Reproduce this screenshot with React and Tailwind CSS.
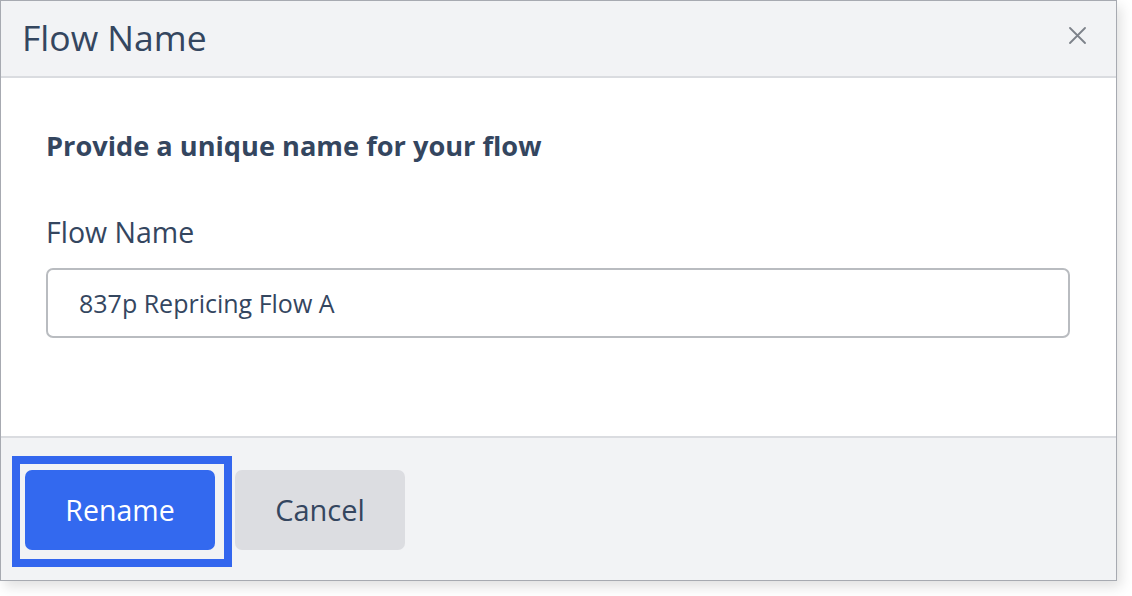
import { useState } from "react";

const CloseIcon = () => (
     <svg width="17" height="17" viewBox="0 0 17 17" fill="none">
          <path
               d="M1 1L16 16M16 1L1 16"
               stroke="#7d828a"
               strokeWidth="1.8"
               strokeLinecap="round"
          />
     </svg>
);

export default function App() {
     const [name, setName] = useState("837p Repricing Flow A");

     return (
          <div
               className="w-[1132px] h-[596px] bg-white"
               style={{ fontFamily: "'Open Sans', 'Noto Sans', sans-serif" }}
          >
               <div className="w-[1117px] h-[581px] flex flex-col border border-[#a7aab1] shadow-[4px_6px_12px_rgba(0,0,0,0.12)]">
                    <div className="h-[77px] shrink-0 flex items-center justify-between pl-[21px] pr-[26px] bg-[#f2f3f5] border-b-2 border-[#dadce0]">
                         <h2 className="text-[35.5px] text-[#34465f] leading-none pb-[2px]">
                              Flow Name
                         </h2>
                         <button className="p-1 mb-[6px]">
                              <CloseIcon />
                         </button>
                    </div>

                    <div className="flex-grow bg-white pl-[45px] pr-[46px] pt-[54px]">
                         <h3 className="text-[27.2px] font-bold text-[#34465f] leading-none">
                              Provide a unique name for your flow
                         </h3>
                         <label className="block mt-[59px] text-[28.5px] text-[#34465f] leading-none">
                              Flow Name
                         </label>
                         <input
                              value={name}
                              onChange={(e) => setName(e.target.value)}
                              className="mt-[21px] w-full h-[70px] px-[31px] rounded-[7px] border-2 border-[#b9bcc0] text-[25px] text-[#34465f] outline-none"
                         />
                    </div>

                    <div className="h-[144px] shrink-0 flex items-start gap-[3px] pl-[11px] pt-[18px] bg-[#f2f3f5] border-t-2 border-[#dadce0]">
                         <div className="border-[8px] border-[#3366ee] pl-[5px] pr-[9px] pt-[6px] pb-[9px]">
                              <button className="w-[190px] h-[80px] rounded-[7px] bg-[#3369ef] text-white text-[28.5px]">
                                   Rename
                              </button>
                         </div>
                         <button className="mt-[14px] w-[170px] h-[80px] rounded-[7px] bg-[#dcdde1] text-[#34465f] text-[29px]">
                              Cancel
                         </button>
                    </div>
               </div>
          </div>
     );
}
